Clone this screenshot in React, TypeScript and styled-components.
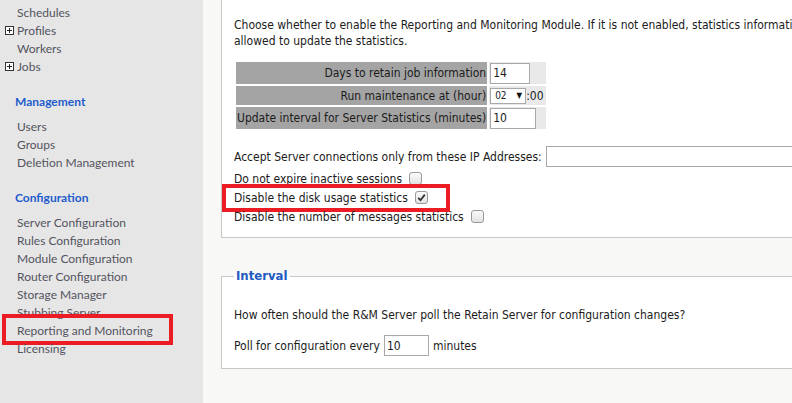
import React from "react";
import styled, { createGlobalStyle, css } from "styled-components";

const Global = createGlobalStyle`
  html, body { margin: 0; padding: 0; overflow: hidden; }
  body { background: #f8f8f7; }
`;

const MAIN_FONT = `"DejaVu Sans Condensed", "Liberation Sans", Arial, sans-serif`;

const Page = styled.div`
  display: flex;
  width: 792px;
  height: 403px;
  overflow: hidden;
`;

const Sidebar = styled.nav`
  width: 203px;
  flex-shrink: 0;
  background: #e6e6e6;
  padding-top: 3px;
  position: relative;
  font-family: Lato, "Open Sans", sans-serif;
  font-size: 12px;
`;

const NavItem = styled.div<{ $highlight?: boolean }>`
  display: flex;
  align-items: center;
  height: 18px;
  padding-left: 5px;
  color: #54545f;
  position: relative;
  white-space: nowrap;
  ${(p) =>
    p.$highlight &&
    css`
      &::after {
        content: "";
        position: absolute;
        left: 2px;
        top: -7px;
        width: 171px;
        height: 31px;
        box-sizing: border-box;
        border: 4px solid #ec1c24;
      }
    `}
`;

const IconSlot = styled.span`
  width: 12px;
  flex-shrink: 0;
  display: inline-flex;
  align-items: center;
`;

const PlusBox = styled.span`
  width: 9px;
  height: 9px;
  box-sizing: border-box;
  border: 1px solid #333;
  background: #fff;
  position: relative;
  &::before,
  &::after {
    content: "";
    position: absolute;
    background: #222;
  }
  &::before { left: 1px; right: 1px; top: 3px; height: 1px; }
  &::after { top: 1px; bottom: 1px; left: 3px; width: 1px; }
`;

const NavHeader = styled.div`
  height: 18px;
  line-height: 18px;
  margin: 18px 0 6px;
  padding-left: 15px;
  color: #1f5ccc;
  font-weight: 700;
`;

const Main = styled.main`
  flex: 1;
  overflow: hidden;
  padding-left: 18px;
  font-family: ${MAIN_FONT};
  font-size: 12px;
  color: #1b1b1b;
`;

const Fieldset = styled.fieldset<{ $cut?: boolean }>`
  width: 1000px;
  margin: 0;
  padding: 0 12px;
  box-sizing: border-box;
  background: #fff;
  border: 1px solid #c8c8c8;
  ${(p) => p.$cut && css`border-top: none;`}
`;

const TopFieldset = styled(Fieldset)`
  padding-top: 17px;
  padding-bottom: 11px;
`;

const IntervalFieldset = styled(Fieldset)`
  margin-top: 30px;
  padding-bottom: 12px;
`;

const Legend = styled.legend`
  padding: 0 2px;
  font-weight: 700;
  font-size: 13px;
  color: #2159c2;
  line-height: 16px;
`;

const Para = styled.p`
  margin: 0;
  line-height: 16px;
  white-space: nowrap;
`;

const SettingsTable = styled.table`
  border-spacing: 2px;
  margin: 11px 0 15px;
  border-collapse: separate;
`;

const Row = styled.tr<{ $h: number }>`
  height: ${(p) => p.$h}px;
`;

const LabelCell = styled.td`
  width: 246px;
  background: #a4a4a4;
  text-align: right;
  padding: 0 1px;
  white-space: nowrap;
`;

const ValueCell = styled.td`
  width: 56px;
  background: #e9e9e9;
  padding: 0 0 0 1px;
  white-space: nowrap;
`;

const TextInput = styled.span<{ $w: number; $h?: number }>`
  display: inline-flex;
  align-items: center;
  box-sizing: border-box;
  width: ${(p) => p.$w}px;
  height: ${(p) => p.$h ?? 21}px;
  border: 1px solid #a9a9a9;
  background: #fff;
  padding-left: 2px;
  vertical-align: middle;
  color: #1b1b1b;
`;

const SelectBox = styled.span`
  display: inline-flex;
  align-items: center;
  justify-content: space-between;
  box-sizing: border-box;
  width: 36px;
  height: 16px;
  border: 1px solid #a9a9a9;
  background: #fff;
  padding: 0 3px 0 4px;
  font-size: 10px;
  vertical-align: middle;
`;

const Arrow = styled.span`
  font-size: 8px;
  color: #111;
`;

const Line = styled.div<{ $h: number; $mark?: boolean }>`
  display: flex;
  align-items: center;
  height: ${(p) => p.$h}px;
  white-space: nowrap;
  position: relative;
  ${(p) =>
    p.$mark &&
    css`
      &::after {
        content: "";
        position: absolute;
        left: -12px;
        top: -4px;
        width: 228px;
        height: 28px;
        box-sizing: border-box;
        border: 4px solid #ec1c24;
      }
    `}
`;

const CheckGroup = styled.div`
  margin-top: 2px;
`;

const Gap = styled.span<{ $w: number }>`
  display: inline-block;
  width: ${(p) => p.$w}px;
`;

const Checkbox = styled.span`
  display: inline-flex;
  align-items: center;
  justify-content: center;
  width: 13px;
  height: 13px;
  box-sizing: border-box;
  border: 1px solid #9a9a9a;
  border-radius: 3px;
  background: linear-gradient(#fbfbfb, #e2e2e2);
`;

const IntervalText = styled.div`
  margin-top: 23px;
  line-height: 16px;
  white-space: nowrap;
`;

const PollLine = styled(Line)`
  margin-top: 12px;
`;

const Check = () => (
  <svg width="9" height="9" viewBox="0 0 9 9">
    <path d="M1.2 4.8 L3.5 7.2 L7.8 1.6" fill="none" stroke="#333" strokeWidth="1.8" />
  </svg>
);

const navTop = [
  { label: "Schedules" },
  { label: "Profiles", plus: true },
  { label: "Workers" },
  { label: "Jobs", plus: true },
];
const management = ["Users", "Groups", "Deletion Management"];
const configuration = [
  "Server Configuration",
  "Rules Configuration",
  "Module Configuration",
  "Router Configuration",
  "Storage Manager",
  "Stubbing Server",
  "Reporting and Monitoring",
  "Licensing",
];

export default function App() {
  return (
    <>
      <Global />
      <Page>
        <Sidebar>
          {navTop.map((n) => (
            <NavItem key={n.label}>
              <IconSlot>{n.plus && <PlusBox />}</IconSlot>
              {n.label}
            </NavItem>
          ))}
          <NavHeader>Management</NavHeader>
          {management.map((m) => (
            <NavItem key={m}>
              <IconSlot />
              {m}
            </NavItem>
          ))}
          <NavHeader>Configuration</NavHeader>
          {configuration.map((c) => (
            <NavItem key={c} $highlight={c === "Reporting and Monitoring"}>
              <IconSlot />
              {c}
            </NavItem>
          ))}
        </Sidebar>
        <Main>
          <TopFieldset $cut>
            <Para>
              Choose whether to enable the Reporting and Monitoring Module. If it is not enabled, statistics information is not collected and the Server is not
              <br />
              allowed to update the statistics.
            </Para>
            <SettingsTable>
              <tbody>
                <Row $h={22}>
                  <LabelCell>Days to retain job information</LabelCell>
                  <ValueCell>
                    <TextInput $w={40}>14</TextInput>
                  </ValueCell>
                </Row>
                <Row $h={19}>
                  <LabelCell>Run maintenance at (hour)</LabelCell>
                  <ValueCell>
                    <SelectBox>
                      02<Arrow>▼</Arrow>
                    </SelectBox>
                    :00
                  </ValueCell>
                </Row>
                <Row $h={22}>
                  <LabelCell>Update interval for Server Statistics (minutes)</LabelCell>
                  <ValueCell>
                    <TextInput $w={46}>10</TextInput>
                  </ValueCell>
                </Row>
              </tbody>
            </SettingsTable>
            <Line $h={21}>
              Accept Server connections only from these IP Addresses:
              <Gap $w={4} />
              <TextInput $w={320} />
            </Line>
            <CheckGroup>
              <Line $h={19}>
                Do not expire inactive sessions
                <Gap $w={7} />
                <Checkbox />
              </Line>
              <Line $h={19} $mark>
                Disable the disk usage statistics
                <Gap $w={7} />
                <Checkbox>
                  <Check />
                </Checkbox>
              </Line>
              <Line $h={19}>
                Disable the number of messages statistics
                <Gap $w={7} />
                <Checkbox />
              </Line>
            </CheckGroup>
          </TopFieldset>
          <IntervalFieldset>
            <Legend>Interval</Legend>
            <IntervalText>
              How often should the R&amp;M Server poll the Retain Server for configuration changes?
            </IntervalText>
            <PollLine $h={21}>
              Poll for configuration every
              <Gap $w={4} />
              <TextInput $w={45}>10</TextInput>
              <Gap $w={4} />
              minutes
            </PollLine>
          </IntervalFieldset>
        </Main>
      </Page>
    </>
  );
}
